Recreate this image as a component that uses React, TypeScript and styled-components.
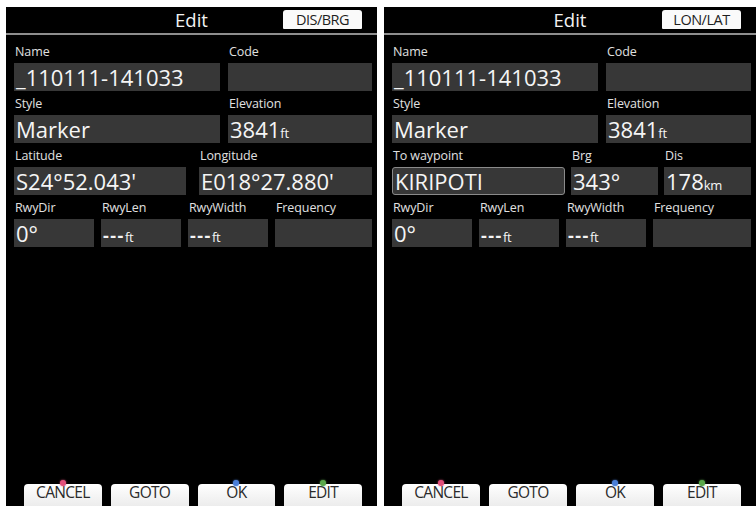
import React from "react";
import styled, { createGlobalStyle } from "styled-components";

const GlobalStyle = createGlobalStyle`
  html, body {
    margin: 0;
    padding: 0;
    background: #ffffff;
    font-family: "Open Sans", "Noto Sans", "DejaVu Sans", sans-serif;
  }
`;

const Screen = styled.div`
  display: grid;
  grid-template-columns: 371px 372px;
  gap: 7px;
  padding: 7px 0 0 6px;
  height: 506px;
  box-sizing: border-box;
  overflow: hidden;
`;

const Panel = styled.div`
  display: flex;
  flex-direction: column;
  background: #000;
  height: 499px;
`;

const Header = styled.div`
  display: grid;
  grid-template-columns: 1fr auto 1fr;
  align-items: center;
  height: 26px;
  border-bottom: 2px solid #8e8e8e;
`;

const Title = styled.div`
  grid-column: 2;
  color: #f2f2f2;
  font-size: 18.5px;
  line-height: 26px;
`;

const Tab = styled.div`
  grid-column: 3;
  justify-self: end;
  align-self: start;
  margin: 3px 15px 0 0;
  width: 79px;
  height: 19px;
  background: #fafafa;
  border-radius: 3px 3px 1px 1px;
  color: #1e1e1e;
  font-size: 14.5px;
  font-weight: 500;
  letter-spacing: -0.5px;
  line-height: 19px;
  text-align: center;
`;

const Body = styled.div`
  display: flex;
  flex-direction: column;
  padding: 4px 5px 0 8px;
`;

const Row = styled.div<{ $cols: string; $gap: number }>`
  display: grid;
  grid-template-columns: ${(p) => p.$cols};
  column-gap: ${(p) => p.$gap}px;
`;

const Field = styled.div`
  display: flex;
  flex-direction: column;
  min-width: 0;
`;

const Label = styled.div`
  height: 24px;
  box-sizing: border-box;
  display: flex;
  align-items: flex-end;
  padding: 0 0 4px 1px;
  color: #e0e0e0;
  font-size: 12.5px;
  line-height: 14px;
  letter-spacing: -0.1px;
`;

const Box = styled.div<{ $outlined?: boolean }>`
  height: 28px;
  box-sizing: border-box;
  background: #373737;
  border: ${(p) => (p.$outlined ? "1px solid #8a8a8a" : "none")};
  border-radius: ${(p) => (p.$outlined ? "3px" : "0")};
  padding-left: 2px;
  color: #f5f5f5;
  font-size: 22px;
  line-height: ${(p) => (p.$outlined ? "26px" : "28px")};
  white-space: nowrap;
  overflow: hidden;
`;

const Unit = styled.span`
  font-size: 13px;
  letter-spacing: -0.3px;
`;

const Dashes = styled.span`
  font-size: 18px;
  font-weight: 700;
  letter-spacing: 1.5px;
`;

const ButtonBar = styled.div`
  margin-top: auto;
  display: flex;
  gap: 9px;
  padding: 0 15px 0 18px;
  height: 22px;
`;

const SoftKey = styled.div`
  position: relative;
  flex: 1;
  background: linear-gradient(#ffffff, #ececec);
  border-radius: 4px 4px 0 0;
  color: #2a2a2a;
  font-size: 15.5px;
  letter-spacing: -0.7px;
  line-height: 17px;
  text-align: center;
`;

const Dot = styled.span<{ $color: string }>`
  position: absolute;
  top: -4px;
  left: 50%;
  width: 6px;
  height: 6px;
  margin-left: -3px;
  border-radius: 50%;
  background: ${(p) => p.$color};
  box-shadow: 0 0 2px ${(p) => p.$color};
`;

type Key = { text: string; dot?: string };

const keys: Key[] = [
  { text: "CANCEL", dot: "#e2507a" },
  { text: "GOTO" },
  { text: "OK", dot: "#4a7fd8" },
  { text: "EDIT", dot: "#5aa84a" },
];

const FtValue = () => (
  <>
    <Dashes>---</Dashes>
    <Unit>ft</Unit>
  </>
);

const TopRows = () => (
  <>
    <Row $cols="206px 1fr" $gap={8}>
      <Field>
        <Label>Name</Label>
        <Box>_110111-141033</Box>
      </Field>
      <Field>
        <Label>Code</Label>
        <Box />
      </Field>
    </Row>
    <Row $cols="206px 1fr" $gap={8}>
      <Field>
        <Label>Style</Label>
        <Box>Marker</Box>
      </Field>
      <Field>
        <Label>Elevation</Label>
        <Box>
          3841<Unit>ft</Unit>
        </Box>
      </Field>
    </Row>
  </>
);

const RunwayRow = () => (
  <Row $cols="80px 80px 80px 1fr" $gap={7}>
    <Field>
      <Label>RwyDir</Label>
      <Box>0°</Box>
    </Field>
    <Field>
      <Label>RwyLen</Label>
      <Box>
        <FtValue />
      </Box>
    </Field>
    <Field>
      <Label>RwyWidth</Label>
      <Box>
        <FtValue />
      </Box>
    </Field>
    <Field>
      <Label>Frequency</Label>
      <Box />
    </Field>
  </Row>
);

const Keys = () => (
  <ButtonBar>
    {keys.map((k) => (
      <SoftKey key={k.text}>
        {k.dot && <Dot $color={k.dot} />}
        {k.text}
      </SoftKey>
    ))}
  </ButtonBar>
);

export default function App() {
  return (
    <>
      <GlobalStyle />
      <Screen>
        <Panel>
          <Header>
            <Title>Edit</Title>
            <Tab>DIS/BRG</Tab>
          </Header>
          <Body>
            <TopRows />
            <Row $cols="172px 1fr" $gap={13}>
              <Field>
                <Label>Latitude</Label>
                <Box>S24°52.043'</Box>
              </Field>
              <Field>
                <Label>Longitude</Label>
                <Box>E018°27.880'</Box>
              </Field>
            </Row>
            <RunwayRow />
          </Body>
          <Keys />
        </Panel>

        <Panel>
          <Header>
            <Title>Edit</Title>
            <Tab>LON/LAT</Tab>
          </Header>
          <Body>
            <TopRows />
            <Row $cols="173px 87px 1fr" $gap={6}>
              <Field>
                <Label>To waypoint</Label>
                <Box $outlined>KIRIPOTI</Box>
              </Field>
              <Field>
                <Label>Brg</Label>
                <Box>343°</Box>
              </Field>
              <Field>
                <Label>Dis</Label>
                <Box>
                  178<Unit>km</Unit>
                </Box>
              </Field>
            </Row>
            <RunwayRow />
          </Body>
          <Keys />
        </Panel>
      </Screen>
    </>
  );
}
